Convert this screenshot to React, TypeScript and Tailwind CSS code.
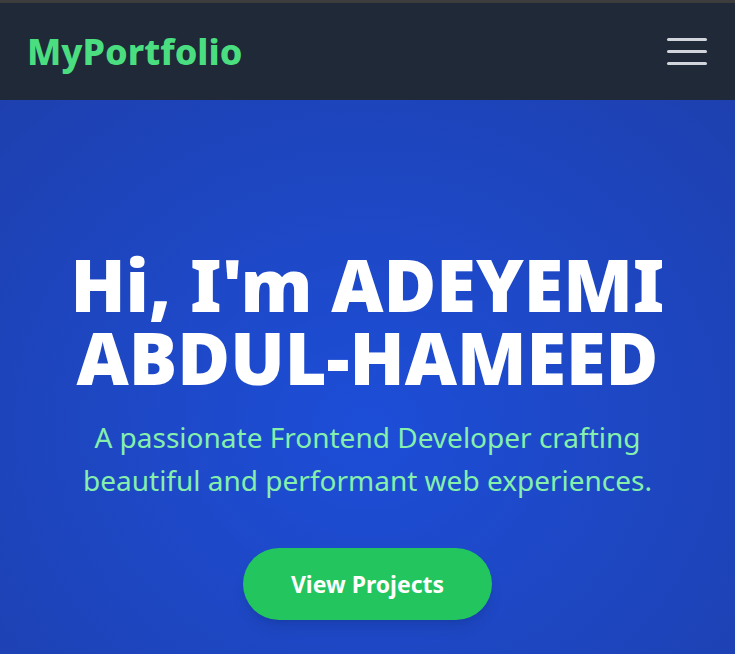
import React from "react";

export default function App() {
  return (
    <div className="min-h-screen bg-[#1e40af] font-['Noto_Sans','Open_Sans',sans-serif]">
      {/* Navbar */}
      <nav className="h-[100px] border-t-[3px] border-[#3d3d3d] bg-[#1f2937] flex items-center justify-between pl-[27px] pr-[28px]">
        <span className="text-[36px] font-extrabold text-[#4ade80]">MyPortfolio</span>
        <button className="flex flex-col gap-[9px] w-[40px]" aria-label="menu">
          <span className="block h-[3px] w-full rounded-full bg-[#d1d5db]" />
          <span className="block h-[3px] w-full rounded-full bg-[#d1d5db]" />
          <span className="block h-[3px] w-full rounded-full bg-[#d1d5db]" />
        </button>
      </nav>

      {/* Hero */}
      <section className="h-[654px] flex flex-col items-center justify-center text-center px-6 pt-[14px] bg-[radial-gradient(ellipse_at_center,#1d4ed8_0%,#1e40af_100%)]">
        <h1 className="text-[72px] leading-[73px] font-black text-white">
          Hi, I'm ADEYEMI
          <br />
          ABDUL-HAMEED
        </h1>
        <p className="mt-[22px] text-[28px] leading-[43px] text-[#86efac] max-w-[600px]">
          A passionate Frontend Developer crafting beautiful and performant web experiences.
        </p>
        <button className="mt-[46px] w-[249px] h-[72px] rounded-full bg-[#22c55e] text-white text-[23px] font-bold shadow-lg">
          View Projects
        </button>
      </section>
    </div>
  );
}
